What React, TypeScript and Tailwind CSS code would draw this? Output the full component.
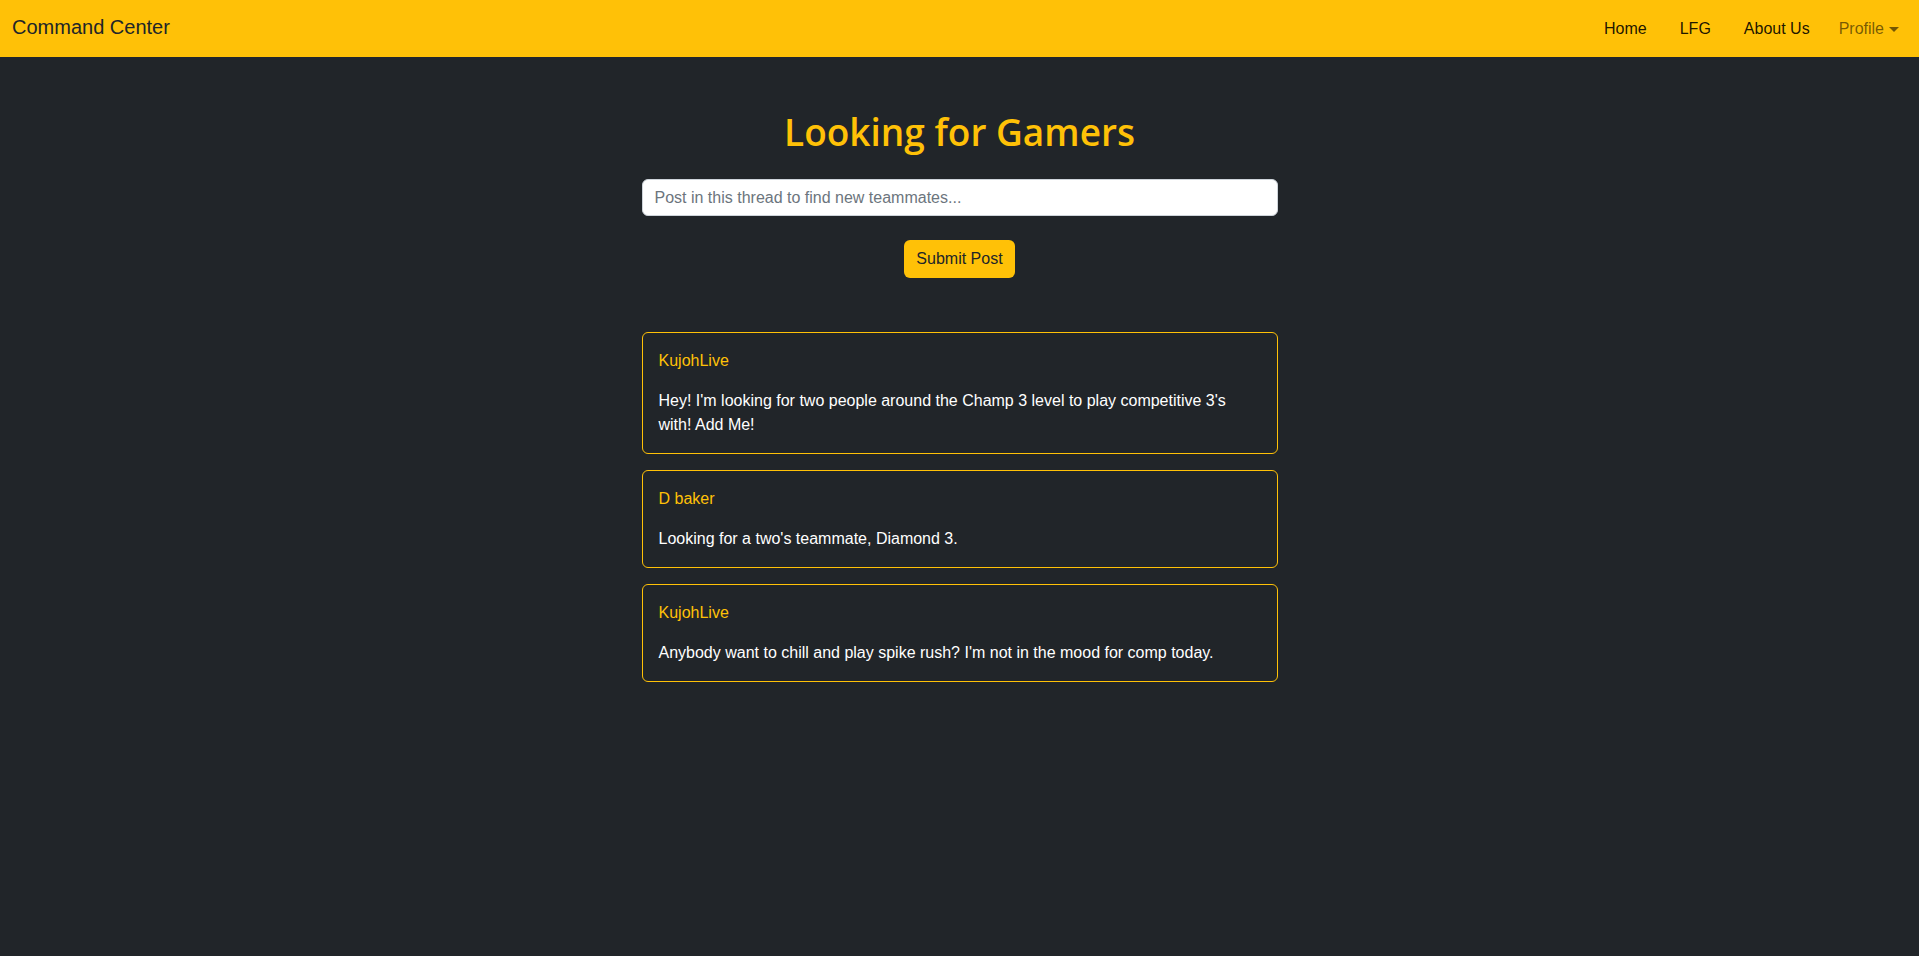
import React from "react";

const posts = [
  {
    user: "KujohLive",
    text: "Hey! I'm looking for two people around the Champ 3 level to play competitive 3's with! Add Me!",
  },
  { user: "D baker", text: "Looking for a two's teammate, Diamond 3." },
  {
    user: "KujohLive",
    text: "Anybody want to chill and play spike rush? I'm not in the mood for comp today.",
  },
];

export default function App() {
  return (
    <div
      className="min-h-screen bg-[#212529] text-white"
      style={{ fontFamily: '"Liberation Sans", Arial, sans-serif' }}
    >
      {/* Navbar */}
      <nav className="h-[57px] bg-[#ffc107] flex items-center justify-between px-3">
        <a className="text-[20px] leading-[30px] text-[#212529] -mt-[4px]">Command Center</a>
        <ul className="flex items-center gap-[17px] text-[16px] leading-6">
          <li className="px-2 text-black/90">Home</li>
          <li className="px-2 text-black/90">LFG</li>
          <li className="px-2 text-black/90">About Us</li>
          <li className="pr-2 pl-1 text-black/55 flex items-center">
            Profile
            <span className="ml-[5px] mt-[1px] inline-block w-0 h-0 border-l-[5px] border-r-[5px] border-t-[5px] border-l-transparent border-r-transparent border-t-black/55" />
          </li>
        </ul>
      </nav>

      {/* Main */}
      <main className="w-[636px] mx-auto pt-[51px] flex flex-col items-center">
        <h1
          className="text-[37px] leading-[48px] font-semibold text-[#ffc107]"
          style={{ fontFamily: '"Open Sans", "Liberation Sans", sans-serif' }}
        >
          Looking for Gamers
        </h1>
        <input
          className="mt-[23px] w-full h-[37px] bg-white rounded-md border border-[#ced4da] px-3 text-[16px] text-[#212529] placeholder:text-[#6c757d] outline-none"
          placeholder="Post in this thread to find new teammates..."
        />
        <button className="mt-[24px] h-[38px] px-3 rounded-md bg-[#ffc107] text-[#212529] text-[16px]">
          Submit Post
        </button>

        <div className="mt-[54px] w-full flex flex-col gap-4">
          {posts.map((p, i) => (
            <div key={i} className="border border-[#ffc107] rounded-md p-4">
              <div className="text-[#ffc107] text-[16px] leading-6">{p.user}</div>
              <p className="mt-4 text-[16px] leading-6 text-white">{p.text}</p>
            </div>
          ))}
        </div>
      </main>
    </div>
  );
}
